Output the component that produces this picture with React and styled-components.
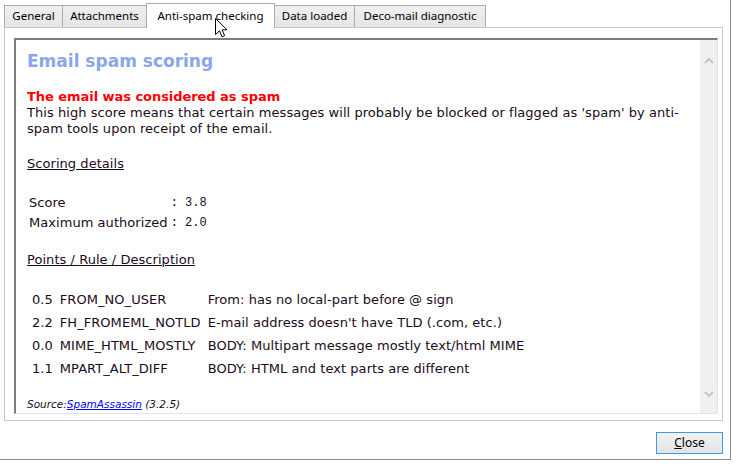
import React from 'react';
import styled, { createGlobalStyle } from 'styled-components';

const GlobalStyle = createGlobalStyle`
  html, body {
    margin: 0;
    padding: 0;
    background: #ffffff;
  }
`;

const tabs = [
    { label: 'General', width: 59 },
    { label: 'Attachments', width: 85 },
    { label: 'Anti-spam checking', width: 129 },
    { label: 'Data loaded', width: 81 },
    { label: 'Deco-mail diagnostic', width: 132 },
];

const rules = [
    { points: '0.5', name: 'FROM_NO_USER', desc: 'From: has no local-part before @ sign' },
    { points: '2.2', name: 'FH_FROMEML_NOTLD', desc: "E-mail address doesn't have TLD (.com, etc.)" },
    { points: '0.0', name: 'MIME_HTML_MOSTLY', desc: 'BODY: Multipart message mostly text/html MIME' },
    { points: '1.1', name: 'MPART_ALT_DIFF', desc: 'BODY: HTML and text parts are different' },
];

const App = () => {
    const active = 2;

    return (
        <>
            <GlobalStyle />
            <Window>
                <TabStrip>
                    {tabs.map((t, i) => (
                        <Tab key={t.label} $active={i === active} $width={t.width}>{t.label}</Tab>
                    ))}
                </TabStrip>

                <Panel>
                    <Viewer>
                        <Content>
                            <Heading>Email spam scoring</Heading>
                            <Alert>The email was considered as spam</Alert>
                            <Text>
                                This high score means that certain messages will probably be blocked or flagged as 'spam' by anti-<br />
                                spam tools upon receipt of the email.
                            </Text>

                            <SectionTitle>Scoring details</SectionTitle>
                            <ScoreGrid>
                                <span>Score</span>
                                <Mono>: 3.8</Mono>
                                <span>Maximum authorized</span>
                                <Mono>: 2.0</Mono>
                            </ScoreGrid>

                            <SectionTitle>Points / Rule / Description</SectionTitle>
                            <RuleGrid>
                                {rules.map(r => (
                                    <React.Fragment key={r.name}>
                                        <span>{r.points}</span>
                                        <span>{r.name}</span>
                                        <span>{r.desc}</span>
                                    </React.Fragment>
                                ))}
                            </RuleGrid>

                            <Source>
                                Source:<SourceLink href="#">SpamAssassin</SourceLink> (3.2.5)
                            </Source>
                        </Content>

                        <ScrollBar>
                            <Chevron viewBox="0 0 10 7">
                                <polyline points="1,6 5,2 9,6" />
                            </Chevron>
                            <Chevron viewBox="0 0 10 7">
                                <polyline points="1,1 5,5 9,1" />
                            </Chevron>
                        </ScrollBar>
                    </Viewer>
                </Panel>

                <Footer>
                    <Button><u>C</u>lose</Button>
                </Footer>

                {/* mouse pointer hovering the active tab */}
                <Cursor viewBox="0 0 13 20">
                    <path d="M0.5 0.5 L0.5 16.5 L4.5 12.8 L7 18.8 L9.6 17.7 L7.1 11.8 L12 11.8 Z" />
                </Cursor>
            </Window>
        </>
    );
};

export default App;

const Window = styled.div`
    position: relative;
    width: 730px;
    height: 459px;
    border-right: 1px solid #8c8c8c;
    border-bottom: 1px solid #8c8c8c;
    display: flex;
    flex-direction: column;
    font-family: "DejaVu Sans", Verdana, sans-serif;
`;

const TabStrip = styled.div`
    display: flex;
    align-items: flex-end;
    height: 27px;
    padding-left: 4px;
    position: relative;
    z-index: 1;
`;

const Tab = styled.div`
    box-sizing: border-box;
    width: ${p => p.$width}px;
    height: ${p => (p.$active ? '25px' : '22px')};
    margin-left: -1px;
    margin-bottom: ${p => (p.$active ? '-1px' : '0')};
    padding-top: ${p => (p.$active ? '2px' : '0')};
    border: 1px solid #acacac;
    border-bottom: none;
    background: ${p => (p.$active ? '#ffffff' : 'linear-gradient(#f0f0f0, #e5e5e5)')};
    font-family: "Noto Sans", "Open Sans", sans-serif;
    font-size: 11.5px;
    line-height: 20px;
    text-align: center;
    color: #000;
    white-space: nowrap;
    &:first-child {
        margin-left: 0;
    }
`;

const Panel = styled.div`
    box-sizing: border-box;
    margin-left: 4px;
    width: 719px;
    height: 394px;
    border: 1px solid #c6c6c6;
    padding: 10px 4px 6px 9px;
    display: flex;
`;

const Viewer = styled.div`
    flex: 1;
    display: flex;
    border-top: 2px solid #7d7d7d;
    border-left: 2px solid #7d7d7d;
    border-right: 1px solid #e3e3e3;
    border-bottom: 1px solid #e3e3e3;
    background: #fff;
    overflow: hidden;
`;

const Content = styled.div`
    flex: 1;
    padding: 11px 0 0 11px;
    font-family: "DejaVu Sans", Verdana, sans-serif;
    font-size: 13px;
    line-height: 16px;
    letter-spacing: 0.05px;
    color: #1c0a22;
`;

const Heading = styled.div`
    font-size: 17px;
    line-height: 20px;
    font-weight: bold;
    letter-spacing: 0;
    color: #89a7e9;
    margin-bottom: 18px;
`;

const Alert = styled.div`
    font-weight: bold;
    letter-spacing: -0.05px;
    color: #ff0000;
`;

const Text = styled.div``;

const SectionTitle = styled.div`
    margin-top: 19px;
    text-decoration: underline;
`;

const ScoreGrid = styled.div`
    display: grid;
    grid-template-columns: auto auto;
    justify-content: start;
    column-gap: 3px;
    padding-left: 2px;
    margin: 21px 0 19px;
    line-height: 20px;
`;

const Mono = styled.span`
    font-family: "Liberation Mono", "Courier New", monospace;
    font-size: 12px;
    letter-spacing: 0;
`;

const RuleGrid = styled.div`
    display: grid;
    grid-template-columns: auto auto auto;
    justify-content: start;
    column-gap: 7px;
    padding-left: 5px;
    margin-top: 20px;
    line-height: 23px;
`;

const Source = styled.div`
    margin-top: 18px;
    font-size: 10.5px;
    line-height: 12px;
    font-style: italic;
    letter-spacing: 0;
`;

const SourceLink = styled.a`
    color: #0000ff;
    text-decoration: underline;
`;

const ScrollBar = styled.div`
    width: 17px;
    background: #f0f0f0;
    display: flex;
    flex-direction: column;
    justify-content: space-between;
    align-items: center;
    padding: 17px 0 15px;
`;

const Chevron = styled.svg`
    width: 10px;
    height: 7px;
    fill: none;
    stroke: #c2c2c2;
    stroke-width: 1.8;
`;

const Footer = styled.div`
    display: flex;
    justify-content: flex-end;
    padding: 11px 7px 0 0;
`;

const Button = styled.button`
    box-sizing: border-box;
    width: 67px;
    height: 22px;
    border: 1px solid #3c9ae8;
    background: linear-gradient(#f2f2f2, #e3e3e3);
    font-family: "Noto Sans", "Open Sans", sans-serif;
    font-size: 12px;
    line-height: 18px;
    color: #000;
    padding: 0;
`;

const Cursor = styled.svg`
    position: absolute;
    left: 215px;
    top: 18px;
    width: 13px;
    height: 20px;
    fill: #fff;
    stroke: #000;
    stroke-width: 1;
    z-index: 5;
`;
